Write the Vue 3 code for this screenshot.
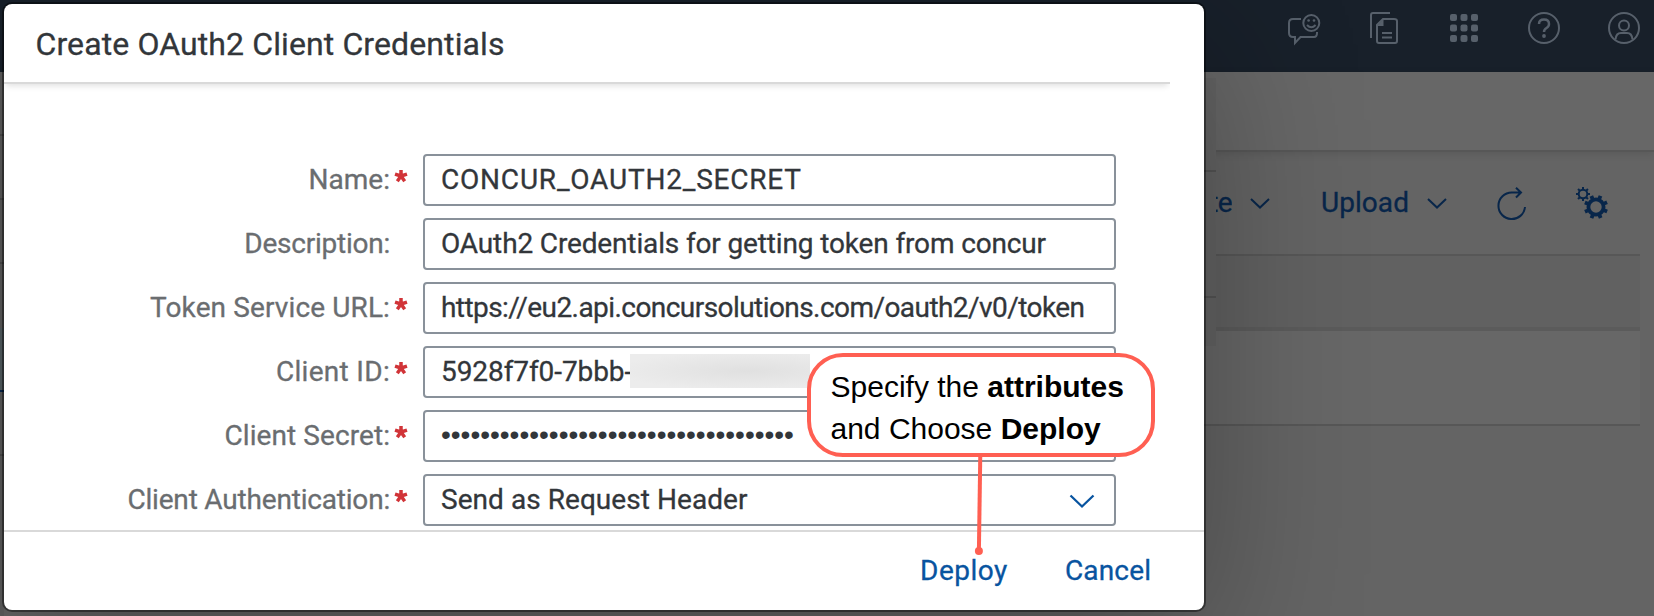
<script setup>
const fields = [
  { label: 'Name:', value: 'CONCUR_OAUTH2_SECRET', required: true, kind: 'name' },
  { label: 'Description:', value: 'OAuth2 Credentials for getting token from concur', required: false, kind: 'description' },
  { label: 'Token Service URL:', value: 'https://eu2.api.concursolutions.com/oauth2/v0/token', required: true, kind: 'url' },
  { label: 'Client ID:', value: '5928f7f0-7bbb-', required: true, kind: 'id' },
  { label: 'Client Secret:', value: '•'.repeat(36), required: true, kind: 'secret' },
  { label: 'Client Authentication:', value: 'Send as Request Header', required: true, kind: 'auth' },
]
const teeth = [0, 45, 90, 135, 180, 225, 270, 315]
</script>

<template>
  <div class="page">
    <div class="shell">
      <svg class="chat" width="34" height="34" viewBox="0 0 34 34">
        <path d="M14 6H6Q2 6 2 10V20Q2 24 6 24H8V30L13.500 24H27Q30 24 30 20V19" />
        <circle cx="24.300" cy="10" r="8" />
        <path d="M20 12Q24.300 16.500 28.600 12" />
        <g class="solid"><circle cx="21.600" cy="7.500" r="1.300" /><circle cx="27" cy="7.500" r="1.300" /></g>
      </svg>
      <svg class="docs" width="30" height="34" viewBox="0 0 30 34">
        <path d="M2 27V4Q2 2 4 2H21" />
        <path d="M14 8H25Q28 8 28 10V30Q28 32 26 32H10Q8 32 8 30V14ZM13 22H23M13 26.500H23" />
        <path class="solid" d="M8 15L14.500 8V15Z" />
      </svg>
      <svg class="apps" width="28" height="28" viewBox="0 0 28 28">
        <g class="solid">
          <template v-for="r in 3" :key="r">
            <rect v-for="c in 3" :key="c" :x="(c - 1) * 10.500" :y="(r - 1) * 10.500" width="7" height="7" rx="2" />
          </template>
        </g>
      </svg>
      <svg class="help" width="34" height="34" viewBox="0 0 34 34">
        <circle cx="17" cy="17" r="15" />
        <path class="mark" d="M12 13Q12 8.500 17 8.500T22 13Q22 15.500 19.500 17T17 21" />
        <circle class="solid" cx="17" cy="25" r="1.900" />
      </svg>
      <svg class="user" width="34" height="34" viewBox="0 0 34 34">
        <circle cx="17" cy="17" r="15" />
        <circle cx="17" cy="14.500" r="5" />
        <path d="M8.500 28.500Q9 22 14 22H20Q25 22 25.500 28.500" />
      </svg>
    </div>
    <div class="title-area"></div>
    <div class="toolbar">
      <span class="create"><i>te</i></span>
      <svg class="chev first" width="20" height="11" viewBox="0 0 20 11"><path d="M1 1L10 9.500L19 1" /></svg>
      <span class="upload">Upload</span>
      <svg class="chev second" width="20" height="11" viewBox="0 0 20 11"><path d="M1 1L10 9.500L19 1" /></svg>
      <svg class="refresh" width="30" height="34" viewBox="0 0 30 34">
        <path d="M28 20A13.300 13.300 0 1 1 14.700 5.500H24M19 .8L24 5.500L19 10.500" />
      </svg>
      <svg class="gears" width="34" height="34" viewBox="0 0 34 34">
        <g transform="translate(8 8)">
          <circle r="4.300" />
          <path v-for="a in teeth" :key="a" d="M0 -4.500V-7" :transform="`rotate(${a})`" />
        </g>
        <g class="big" transform="translate(21 21)">
          <circle r="7.600" />
          <path v-for="a in teeth" :key="a" d="M0 -8V-12" :transform="`rotate(${a + 22})`" />
        </g>
      </svg>
    </div>
    <div class="table">
      <div class="table-head"></div>
      <div class="table-row"></div>
    </div>

    <div class="left-edge"><b></b></div>
    <div class="right-edge"></div>

    <section class="dialog">
      <header><h1>Create OAuth2 Client Credentials</h1></header>
      <div class="form">
        <div v-for="f in fields" :key="f.label" class="row" :class="f.kind">
          <label>{{ f.label }}</label>
          <span class="star">
            <svg v-if="f.required" width="14" height="14" viewBox="-7 -7 14 14">
              <path d="M0 0V-6M0 0L6 -1.900M0 0L3.700 5.200M0 0L-3.700 5.200M0 0L-6 -1.900" />
            </svg>
          </span>
          <div class="input">
            <span class="value">{{ f.value }}</span>
            <span v-if="f.kind === 'id'" class="redacted"></span>
            <svg v-if="f.kind === 'auth'" class="arrow" width="26" height="15" viewBox="0 0 26 15"><path d="M1.500 1.500L13 12.500L24.500 1.500" /></svg>
          </div>
        </div>
      </div>
      <footer>
        <span class="deploy">Deploy</span>
        <span class="cancel">Cancel</span>
      </footer>
    </section>

    <svg class="pointer" width="14" height="104" viewBox="0 0 14 104">
      <path d="M8.300 0L6.900 98" /><circle cx="6.900" cy="98" r="4" />
    </svg>
    <div class="callout">Specify the <b>attributes</b><br>and Choose <b>Deploy</b></div>
  </div>
</template>

<style>
body { margin: 0; overflow: hidden; }
</style>

<style scoped>
* { box-sizing: border-box; }
.page {
  position: relative;
  width: 1654px;
  height: 616px;
  overflow: hidden;
  background: #646464;
  font-family: Roboto, "Liberation Sans", sans-serif;
  font-size: 28px;
}
svg { display: block; flex: none; fill: none; }
.shell {
  display: flex;
  align-items: flex-start;
  height: 72px;
  padding: 11px 0 0 1287px;
  background: #18202a;
}
.shell svg { stroke: #57606b; stroke-width: 2; }
.shell .solid { fill: #57606b; stroke: none; }
.chat { margin-top: 2px; }
.docs { margin-left: 48px; }
.apps { margin: 3px 0 0 51px; }
.help { margin-left: 49px; }
.help .mark { stroke-width: 2.5; }
.user { margin-left: 46px; }
.title-area { height: 80px; background: #676767; border-bottom: 2px solid #575757; box-shadow: 0 2px 8px rgba(0, 0, 0, 0.1); }
.toolbar {
  display: flex;
  align-items: flex-start;
  height: 102px;
  padding-left: 1216px;
  color: #08264a;
}
.toolbar svg { stroke: #08264a; stroke-width: 2; }
.create { display: flex; justify-content: flex-end; width: 16px; height: 80px; padding-top: 34px; overflow: hidden; line-height: 34px; letter-spacing: -0.6px; }
.create i { font-style: normal; }
.create, .upload, h1, label, .value, footer { -webkit-text-stroke: 0.3px currentColor; }
.upload { width: 88px; margin: 34px 0 0 51px; line-height: 34px; letter-spacing: 0.05px; }
.chev { margin-top: 46px; }
.first { margin-left: 18px; }
.second { margin-left: 18px; }
.refresh { margin: 35px 0 0 50px; }
.gears { margin: 34px 0 0 48px; }
.gears .big { stroke-width: 3.8; }
.table { width: 1640px; border-top: 2px solid #575757; }
.table-head { height: 75px; background: #616161; border-bottom: 4px solid #5b5b5b; }
.table-row { height: 95px; background: #676767; border-bottom: 2px solid #575757; }
.left-edge {
  position: absolute;
  left: 0;
  top: 72px;
  width: 4px;
  height: 544px;
  background: linear-gradient(#4c4c4c 0 0) 0 62px / 4px 2px no-repeat, linear-gradient(#4c4c4c 0 0) 0 126px / 4px 2px no-repeat,
    linear-gradient(#4c4c4c 0 0) 0 190px / 4px 2px no-repeat, linear-gradient(#4c4c4c 0 0) 0 382px / 4px 2px no-repeat, #5e5e5e;
}
.left-edge b { display: block; height: 64px; margin-top: 256px; background: #566064; border-bottom: 2px solid #06264e; }
.right-edge {
  position: absolute;
  left: 1204px;
  top: 78px;
  width: 12px;
  height: 268px;
  background: linear-gradient(#545454 0 0) 0 92px / 12px 2px no-repeat, linear-gradient(#545454 0 0) 0 218px / 12px 2px no-repeat, #636363;
}
.dialog {
  position: absolute;
  left: 4px;
  top: 4px;
  width: 1200px;
  height: 606px;
  display: flex;
  flex-direction: column;
  border-radius: 8px;
  background: #fff;
  color: #32363a;
  box-shadow: 0 0 0 2px rgba(0, 0, 0, 0.42), 0 40px 160px rgba(0, 0, 0, 0.3);
}
header { width: 1166px; height: 80px; border-bottom: 2px solid #d9d9d9; box-shadow: 0 4px 6px -2px rgba(0, 0, 0, 0.12); clip-path: inset(0 0 -12px 0); }
h1 { margin: 0; padding-left: 31.500px; font-size: 32px; font-weight: 400; line-height: 81px; letter-spacing: 0.11px; white-space: nowrap; }
.form { display: flex; flex-direction: column; gap: 12px; height: 446px; padding-top: 70px; }
.row { display: flex; height: 52px; flex: none; line-height: 52px; white-space: nowrap; }
label { width: 386px; text-align: right; color: #6a6d70; }
.star { width: 33px; padding: 15px 0 0 4px; }
.star path { stroke: #d13438; stroke-width: 3.5; }
.input { position: relative; display: flex; width: 693px; height: 52px; padding: 0 19px 0 16px; border: 2px solid #89919a; border-radius: 4px; line-height: 47px; }
.name .value { letter-spacing: 0.8px; }
.description .value { letter-spacing: -0.14px; }
.url .value { letter-spacing: -0.56px; }
.auth .value { letter-spacing: 0.05px; }
.description label { letter-spacing: -0.24px; }
.url label { letter-spacing: 0.12px; }
.id label { letter-spacing: 0.3px; }
.secret label { letter-spacing: 0.08px; }
.auth label { letter-spacing: -0.19px; }
.secret .value { font-family: "Liberation Sans", sans-serif; line-height: 46px; -webkit-text-stroke: 0; }
.redacted { width: 180px; height: 34px; margin-top: 6px; background: radial-gradient(ellipse at 65% 50%, #e0e0e0, #ececec 80%); }
.id .value { width: 189px; letter-spacing: -0.08px; }
.arrow { margin: 18px 0 0 auto; stroke: #0854a0; stroke-width: 2.3; }
footer { display: flex; flex: 1; padding-left: 916px; border-top: 2px solid #d9d9d9; color: #0854a0; line-height: 78px; }
.deploy { width: 145px; letter-spacing: 0.5px; }
.cancel { letter-spacing: 0.15px; }
.pointer { position: absolute; left: 972px; top: 453px; stroke: #ff5f52; stroke-width: 4; }
.pointer circle { fill: #ff5f52; stroke: none; }
.callout {
  position: absolute;
  left: 807px;
  top: 353px;
  width: 348px;
  height: 104px;
  padding: 9px 0 0 19.500px;
  border: 4px solid #ff5f52;
  border-radius: 36px;
  background: #fff;
  color: #000;
  font: 30px/41.500px "Liberation Sans", sans-serif;
  white-space: nowrap;
}
</style>
